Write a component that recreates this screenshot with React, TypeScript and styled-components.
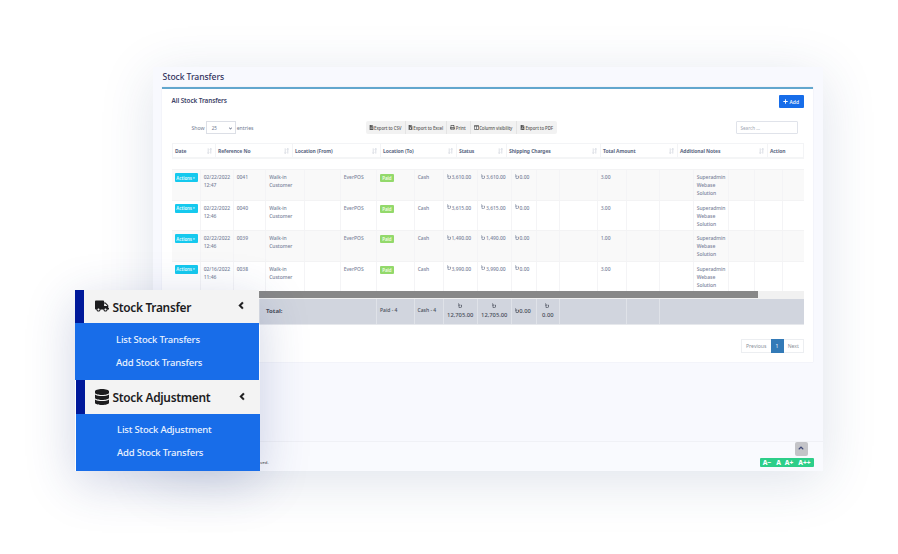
import React from "react";
import styled, { createGlobalStyle } from "styled-components";
import {
  FaTruck, FaDatabase, FaFileCsv, FaFileExcel, FaFilePdf, FaPrint, FaColumns,
  FaPlus, FaAngleLeft, FaAngleUp, FaAngleDown, FaCaretDown,
} from "react-icons/fa";
import { FaBangladeshiTakaSign } from "react-icons/fa6";

const Global = createGlobalStyle`
  * { box-sizing: border-box; }
  body { margin: 0; background: #fff; overflow: hidden; font-family: "Noto Sans", "Open Sans", sans-serif; }
`;

const Page = styled.main`
  position: relative;
  width: 898px;
  height: 554px;
  padding: 67px 75px 83px 153px;
  overflow: hidden;
  background: #fff;
`;

const Window = styled.section`
  display: flex;
  flex-direction: column;
  width: 670px;
  height: 404px;
  padding: 0 10px 0 9px;
  background: #f8f9fe;
  box-shadow: 0 10px 50px rgba(40, 70, 120, 0.15);
`;

const PageTitle = styled.h1`
  height: 20px;
  margin: 0;
  padding-left: 0.5px;
  font-size: 8.6px;
  line-height: 20px;
  font-weight: 500;
  letter-spacing: -0.07px;
  color: #32325d;
`;

const Panel = styled.section`
  display: flex;
  flex-direction: column;
  width: 651px;
  height: 275px;
  padding: 0 9px 0 9.5px;
  border-top: 2px solid #62a7ce;
  background: #fff;
  box-shadow: 0 0 1px rgba(40, 60, 100, 0.15);
`;

const PanelHead = styled.header`
  display: flex;
  justify-content: space-between;
  height: 32px;
  padding: 6px 0.5px 0 0;
`;

const PanelTitle = styled.h2`
  margin: 0;
  font-size: 6.4px;
  line-height: 11px;
  font-weight: 600;
  letter-spacing: -0.1px;
  color: #3c4266;
`;

const AddButton = styled.button`
  display: flex;
  align-items: center;
  justify-content: center;
  gap: 1.5px;
  width: 25px;
  height: 13px;
  padding: 0;
  border: 0;
  border-radius: 1px;
  background: #176de9;
  color: #fff;
  font: 500 5px "Noto Sans", sans-serif;
`;

const Toolbar = styled.div`
  display: grid;
  grid-template-columns: 194px 191px 1fr;
  height: 22px;
`;

const Length = styled.div`
  display: flex;
  align-items: center;
  gap: 1px;
  height: 13px;
  padding-left: 20px;
  font-size: 5.2px;
  line-height: 12px;
  color: #6f7a92;
`;

const LengthSelect = styled.span`
  display: flex;
  align-items: center;
  justify-content: space-between;
  width: 30px;
  height: 13px;
  padding: 1px 2px 0 5px;
  border: 1px solid #dcdfe6;
  font-size: 4.6px;
`;

const Exports = styled.div`
  display: flex;
  height: 13px;
  border-radius: 2px;
  background: #f2f2f2;
  color: #444;
`;

const ExportButton = styled.button<{ $w: number }>`
  display: flex;
  align-items: center;
  justify-content: center;
  gap: 0.5px;
  width: ${(p) => p.$w}px;
  height: 13px;
  padding: 0;
  border: 0;
  border-right: 1px solid #e4e4e4;
  background: none;
  color: #555;
  font: 500 4.4px "Noto Sans", sans-serif;
  letter-spacing: -0.08px;
  white-space: nowrap;
  &:last-child { border-right: 0; }
`;

const Search = styled.div`
  justify-self: end;
  width: 62px;
  height: 13px;
  margin-right: 6.5px;
  padding-left: 4px;
  border: 1px solid #e0e3ea;
  border-radius: 1px;
  font-size: 4.6px;
  line-height: 12px;
  color: #a0a6b2;
`;

const HeadRow = styled.div`
  display: grid;
  grid-template-columns: 43px 77px 88px 76px 50px 94px 77px 90px 37px;
  height: 16px;
  margin-bottom: 10px;
  border: 1px solid #f3f4f6;
  border-bottom: 2px solid #f4f5f6;
`;

const HeadCell = styled.div`
  display: flex;
  align-items: center;
  justify-content: space-between;
  padding: 0 3px 0 2.5px;
  border-right: 1px solid #f3f4f6;
  font-size: 5px;
  font-weight: 700;
  letter-spacing: -0.1px;
  color: #5c6883;
  white-space: nowrap;
  &:last-child { border-right: 0; }
`;

const columns = "29px 33px 32.5px 39px 35.5px 36.5px 37.5px 29px 34.5px 33.5px 25px 23.5px 37.5px 29px 33px 34px 35px 26.5px 27.5px 1fr";

const BodyRow = styled.div<{ $striped: boolean }>`
  display: grid;
  grid-template-columns: ${columns};
  height: 30.5px;
  border-top: 1px solid #f3f3f4;
  background: ${(p) => (p.$striped ? "#f9f9f9" : "#fff")};
`;

const Cell = styled.div`
  padding: 3px 0 0 3.2px;
  border-right: 1px solid #f4f4f6;
  font-size: 5px;
  line-height: 8px;
  letter-spacing: -0.03px;
  font-weight: 500;
  color: #7a849b;
  white-space: nowrap;
  &:last-child { border-right: 0; }
`;

const ActionTag = styled.span`
  display: flex;
  align-items: center;
  justify-content: center;
  width: 23px;
  height: 9px;
  border-radius: 1px;
  background: #15c9ee;
  color: #e6fbff;
  font-size: 4.4px;
  font-weight: 600;
`;

const PaidTag = styled.span`
  display: block;
  width: 13.5px;
  height: 8px;
  margin-top: 1px;
  border-radius: 1px;
  background: #93d96b;
  color: #f2ffe9;
  font-size: 4.5px;
  line-height: 8px;
  font-weight: 600;
  text-align: center;
`;

const TakaIcon = styled(FaBangladeshiTakaSign)`
  width: 4px;
  height: 5.5px;
  margin-right: 0.8px;
`;

const ScrollTrack = styled.div`
  height: 7.5px;
  flex: none;
  background: #f1f1f1;
`;

const ScrollThumb = styled.div`
  width: 586.5px;
  height: 7px;
  background: #888;
`;

const TotalRow = styled.div`
  display: grid;
  grid-template-columns: 91.5px 114px 37.5px 29px 34.5px 33.5px 25px 23.5px 66.5px 33px 1fr;
  flex: none;
  height: 26px;
  border-bottom: 1px solid #e6e8ec;
  background: #d1d5de;
`;

const TotalCell = styled.div<{ $rule?: boolean; $size?: number; $bold?: boolean; $lift?: number }>`
  display: flex;
  flex-direction: column;
  justify-content: center;
  padding: 0 0 ${(p) => p.$lift ?? 0}px 3px;
  border-right: ${(p) => (p.$rule ? "1px solid #dfe2e8" : "0")};
  font-size: ${(p) => p.$size ?? 5}px;
  font-weight: ${(p) => (p.$bold ? 700 : 500)};
  line-height: 10px;
  color: #484d5a;
  white-space: nowrap;
`;

const Stacked = styled.span`
  display: flex;
  flex-direction: column;
  align-items: center;
  gap: 1.5px;
  width: 100%;
  padding: 1px 3px 0 0;
`;

const Pager = styled.nav`
  display: flex;
  align-self: flex-end;
  width: 63px;
  height: 14px;
  margin-top: 14px;
  border: 1px solid #eceef1;
`;

const PagerItem = styled.span<{ $w: number; $active?: boolean }>`
  width: ${(p) => p.$w}px;
  margin: ${(p) => (p.$active ? "-1px 0" : "0")};
  background: ${(p) => (p.$active ? "#337ab7" : "#fff")};
  color: ${(p) => (p.$active ? "#fff" : "#8a8f99")};
  font-size: 5.1px;
  line-height: ${(p) => (p.$active ? 14 : 12)}px;
  text-align: center;
`;

const WindowFooter = styled.footer`
  display: flex;
  justify-content: space-between;
  height: 30px;
  margin: auto -10px 0 -9px;
  padding: 0 9.5px 0 107px;
  border-top: 1px solid #f0f1f6;
  background: #f9fafe;
`;

const Copyright = styled.span`
  margin-top: 16px;
  font-size: 4.3px;
  line-height: 8px;
  font-weight: 500;
  color: #555;
`;

const FooterTools = styled.div`
  display: flex;
  flex-direction: column;
  align-items: flex-end;
  gap: 2px;
`;

const TopButton = styled.button`
  display: flex;
  align-items: center;
  justify-content: center;
  width: 12.5px;
  height: 14px;
  margin-right: 6px;
  padding: 0 0 2px;
  border: 0;
  border-radius: 2px;
  background: #c4c4c8;
  color: #404a78;
`;

const SizeBar = styled.div`
  display: grid;
  grid-template-columns: 15px 8px 13px 18px;
  width: 54px;
  height: 9px;
  border-radius: 1px;
  background: #2dce89;
  color: #fff;
  font-size: 6.6px;
  line-height: 9px;
  font-weight: 800;
  text-align: center;
`;

const SideMenu = styled.aside`
  position: absolute;
  left: 75px;
  top: 290px;
  width: 185px;
  box-shadow: 0 12px 46px rgba(40, 60, 130, 0.22);
`;

const MenuGroup = styled.section<{ $shift?: boolean }>`
  width: 184px;
  margin-left: ${(p) => (p.$shift ? 1 : 0)}px;
`;

const MenuHead = styled.div<{ $h: number }>`
  display: flex;
  align-items: center;
  height: ${(p) => p.$h}px;
  padding: 0 13px 0 ${(p) => (p.$h === 34 ? 9 : 11)}px;
  border-left: 9px solid #00199a;
  background: #f3f3f3;
  color: #1c1c1e;
`;

const MenuIcon = styled.span<{ $w: number }>`
  display: flex;
  width: ${(p) => p.$w}px;
  margin-top: -1px;
`;

const MenuTitle = styled.span`
  flex: 1;
  font-size: 11.9px;
  font-weight: 600;
  line-height: 16px;
  letter-spacing: -0.3px;
  white-space: nowrap;
`;

const Chevron = styled(FaAngleLeft)`
  width: 10px;
  height: 11px;
  margin-top: -2px;
  stroke: currentColor;
  stroke-width: 20px;
`;

const SubMenu = styled.div<{ $lift?: boolean }>`
  height: 57px;
  padding: ${(p) => (p.$lift ? 4 : 5)}px 0 0 41px;
  background: #186de9;
`;

const SubItem = styled.a`
  display: block;
  font-size: 9.5px;
  line-height: 23px;
  font-weight: 500;
  letter-spacing: -0.19px;
  color: #eaf2ff;
`;

const SortMark = () => (
  <svg width="5" height="6" viewBox="0 0 5 6" fill="none" stroke="#ccd0d8" strokeWidth="0.7">
    <path d="M1.2 0.4V5.5M0.2 4.5L1.2 5.5L2.2 4.5M3.8 5.6V0.5M2.8 1.5L3.8 0.5L4.8 1.5" />
  </svg>
);

const heads = ["Date", "Reference No", "Location (From)", "Location (To)", "Status", "Shipping Charges", "Total Amount", "Additional Notes", "Action"];

const rows = [
  { date: "02/22/2022", time: "12:47", ref: "0041", amount: "3,610.00", qty: "3.00" },
  { date: "02/22/2022", time: "12:46", ref: "0040", amount: "3,615.00", qty: "3.00" },
  { date: "02/22/2022", time: "12:46", ref: "0039", amount: "1,490.00", qty: "1.00" },
  { date: "02/16/2022", time: "11:46", ref: "0038", amount: "3,990.00", qty: "3.00" },
];

const exportsList = [
  { label: "Export to CSV", w: 40, Icon: FaFileCsv },
  { label: "Export to Excel", w: 41, Icon: FaFileExcel },
  { label: "Print", w: 24, Icon: FaPrint },
  { label: "Column visibility", w: 46, Icon: FaColumns },
  { label: "Export to PDF", w: 40, Icon: FaFilePdf },
];

export default function App() {
  return (
    <>
      <Global />
      <Page>
        <Window>
          <PageTitle>Stock Transfers</PageTitle>
          <Panel>
            <PanelHead>
              <PanelTitle>All Stock Transfers</PanelTitle>
              <AddButton><FaPlus size={5} />Add</AddButton>
            </PanelHead>
            <Toolbar>
              <Length>
                Show
                <LengthSelect>25<FaAngleDown size={5} /></LengthSelect>
                entries
              </Length>
              <Exports>
                {exportsList.map(({ label, w, Icon }) => (
                  <ExportButton key={label} $w={w}><Icon size={5} />{label}</ExportButton>
                ))}
              </Exports>
              <Search>Search ...</Search>
            </Toolbar>
            <HeadRow>
              {heads.map((h) => (
                <HeadCell key={h}>{h}{h !== "Action" && <SortMark />}</HeadCell>
              ))}
            </HeadRow>
            {rows.map((r, i) => (
              <BodyRow key={r.ref} $striped={i % 2 === 0}>
                <Cell><ActionTag>Actions<FaCaretDown size={4} /></ActionTag></Cell>
                <Cell>{r.date}<br />{r.time}</Cell>
                <Cell>{r.ref}</Cell>
                <Cell>Walk-in<br />Customer</Cell>
                <Cell />
                <Cell>EverPOS</Cell>
                <Cell><PaidTag>Paid</PaidTag></Cell>
                <Cell>Cash</Cell>
                <Cell><TakaIcon />{r.amount}</Cell>
                <Cell><TakaIcon />{r.amount}</Cell>
                <Cell><TakaIcon />0.00</Cell>
                <Cell /><Cell />
                <Cell>{r.qty}</Cell>
                <Cell /><Cell />
                <Cell>Superadmin<br />Webase<br />Solution</Cell>
                <Cell /><Cell /><Cell />
              </BodyRow>
            ))}
            <ScrollTrack><ScrollThumb /></ScrollTrack>
            <TotalRow>
              <TotalCell />
              <TotalCell $rule $size={6} $bold>Total:</TotalCell>
              <TotalCell $rule $lift={2}>Paid - 4</TotalCell>
              <TotalCell $rule $lift={2}>Cash - 4</TotalCell>
              <TotalCell $rule $size={5.8}><Stacked><TakaIcon /><span>12,705.00</span></Stacked></TotalCell>
              <TotalCell $rule $size={5.8}><Stacked><TakaIcon /><span>12,705.00</span></Stacked></TotalCell>
              <TotalCell $rule $size={5.8}><span><TakaIcon />0.00</span></TotalCell>
              <TotalCell $rule $size={5.8}><Stacked><TakaIcon /><span>0.00</span></Stacked></TotalCell>
              <TotalCell $rule />
              <TotalCell $rule />
              <TotalCell />
            </TotalRow>
            <Pager>
              <PagerItem $w={28.5}>Previous</PagerItem>
              <PagerItem $w={13} $active>1</PagerItem>
              <PagerItem $w={19.5}>Next</PagerItem>
            </Pager>
          </Panel>
          <WindowFooter>
            <Copyright>ved.</Copyright>
            <FooterTools>
              <TopButton><FaAngleUp size={8} /></TopButton>
              <SizeBar><span>A−</span><span>A</span><span>A+</span><span>A++</span></SizeBar>
            </FooterTools>
          </WindowFooter>
        </Window>
        <SideMenu>
          <MenuGroup>
            <MenuHead $h={33}>
              <MenuIcon $w={17.5}><FaTruck size={14} /></MenuIcon>
              <MenuTitle>Stock Transfer</MenuTitle>
              <Chevron />
            </MenuHead>
            <SubMenu>
              <SubItem>List Stock Transfers</SubItem>
              <SubItem>Add Stock Transfers</SubItem>
            </SubMenu>
          </MenuGroup>
          <MenuGroup $shift>
            <MenuHead $h={34}>
              <MenuIcon $w={18.5}><FaDatabase size={16} /></MenuIcon>
              <MenuTitle>Stock Adjustment</MenuTitle>
              <Chevron />
            </MenuHead>
            <SubMenu $lift>
              <SubItem>List Stock Adjustment</SubItem>
              <SubItem>Add Stock Transfers</SubItem>
            </SubMenu>
          </MenuGroup>
        </SideMenu>
      </Page>
    </>
  );
}
